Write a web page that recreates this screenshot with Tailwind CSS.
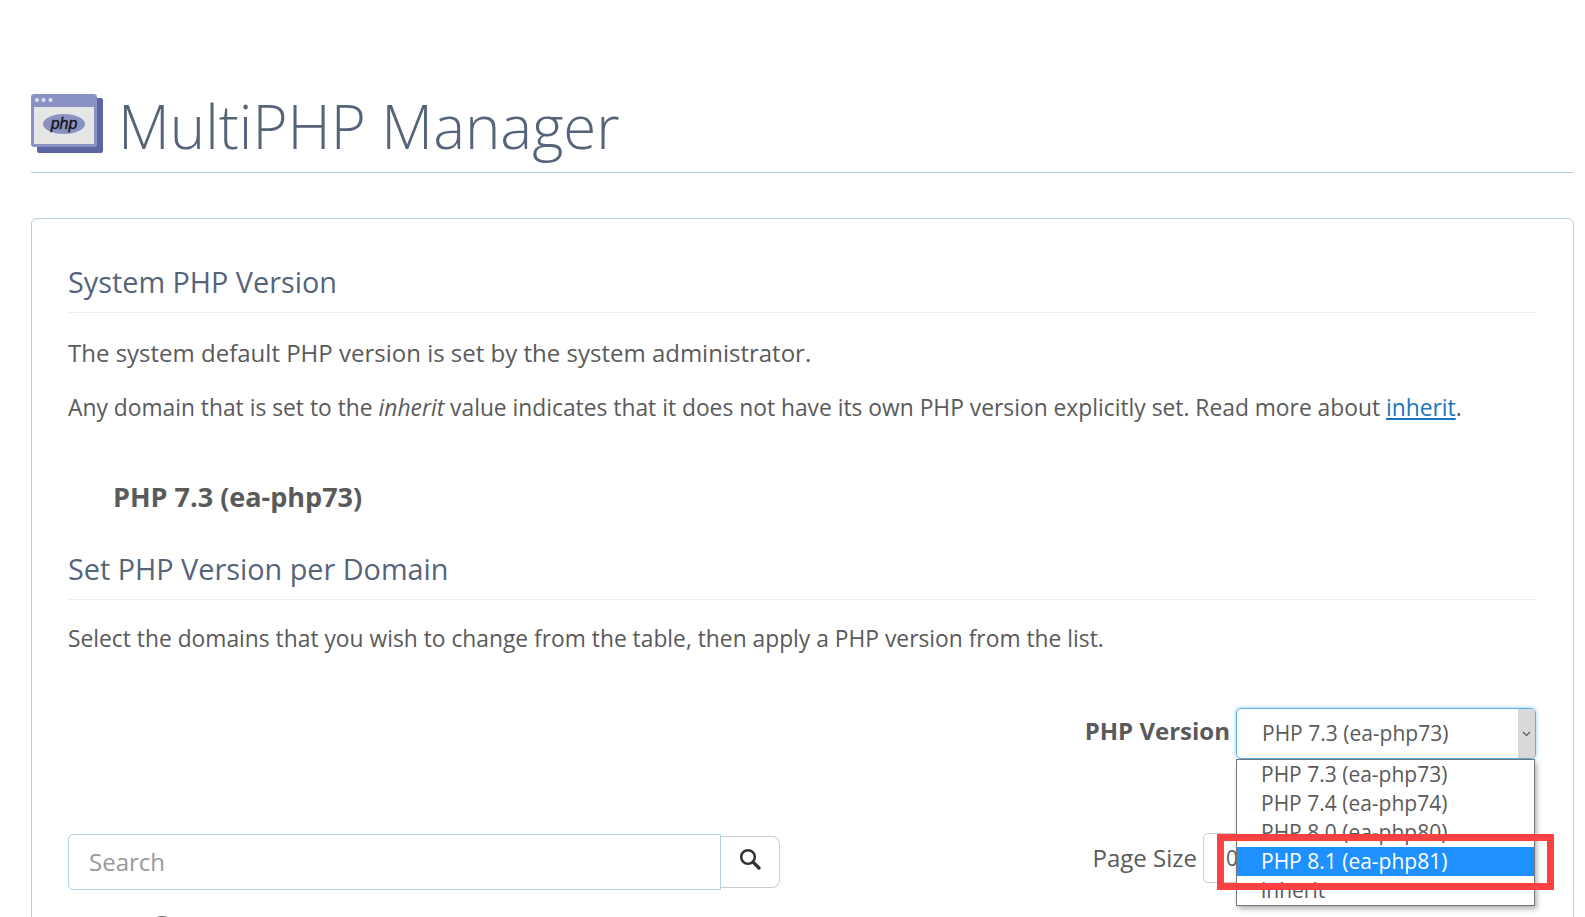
<!DOCTYPE html>
<html lang="en">
<head>
<meta charset="UTF-8">
<title>MultiPHP Manager</title>
<script src="https://cdn.jsdelivr.net/npm/@tailwindcss/browser@4"></script>
</head>
<body class="bg-white h-[917px] overflow-hidden font-['Open_Sans',sans-serif] text-[#5a5a5a]">

<!-- Heading -->
<div class="pt-[86px] pl-[31px] pr-[11px]">
  <div class="flex items-center h-[87px] border-b border-[#b5d0e0]">
    <svg width="72" height="59" viewBox="0 0 72 59" class="mr-[15px] mb-[11px]">
      <rect x="6" y="4" width="66" height="55" rx="2" fill="#5d66a3"/>
      <rect x="0" y="0" width="66" height="53" rx="3" fill="#8a92c4"/>
      <circle cx="6" cy="6" r="2" fill="#e4e4ea"/><circle cx="12.500" cy="6" r="2" fill="#e4e4ea"/><circle cx="19.500" cy="6" r="2" fill="#e4e4ea"/>
      <rect x="3" y="13" width="60" height="37" fill="#e6e6e6"/>
      <ellipse cx="33" cy="30" rx="21" ry="10" fill="#8a92c4"/>
      <text x="33" y="35" text-anchor="middle" font-family="Liberation Sans" font-style="italic" font-size="16" fill="#111" stroke="#111" stroke-width="0.300">php</text>
    </svg>
    <h1 class="text-[60px] leading-none text-[#56647a] font-light -mt-[6px]">MultiPHP Manager</h1>
  </div>
</div>

<!-- Card -->
<div class="ml-[31px] mr-[11px] mt-[45px] border border-[#b5d0e0] rounded-[6px] px-[36px] pr-[37px] pt-[44px] h-[800px]">
  <h2 class="text-[28.8px] leading-[38px] text-[#56647a] pb-[11px] border-b border-[#eee]">System PHP Version</h2>
  <p class="text-[24px] leading-[34px] mt-[23px]">The system default PHP version is set by the system administrator.</p>
  <p class="text-[22.8px] leading-[34px] mt-[21px]">Any domain that is set to the <em>inherit</em> value indicates that it does not have its own PHP version explicitly set. Read more about <a href="#" class="text-[#1b75bb] underline">inherit</a>.</p>
  <p class="text-[27px] leading-[36px] font-bold mt-[54px] ml-[45px]">PHP 7.3 (ea-php73)</p>
  <h2 class="text-[28.8px] leading-[38px] text-[#56647a] mt-[35px] pb-[11px] border-b border-[#eee]">Set PHP Version per Domain</h2>
  <p class="text-[22.8px] leading-[34px] mt-[22px]">Select the domains that you wish to change from the table, then apply a PHP version from the list.</p>

  <div class="flex justify-end items-center mt-[52px] relative">
    <span class="text-[24px] font-bold mr-[6px] mb-[6px]">PHP Version</span>
    <div class="w-[300px] h-[51px] border border-[#5aaee6] rounded-[5px] flex shadow-[0_0_4px_#8ccaf0]">
      <span class="flex-1 pl-[25px] text-[21px] leading-[49px]">PHP 7.3 (ea-php73)</span>
      <span class="w-[17px] bg-[#d9d9d9] flex items-center justify-center rounded-r-[4px]">
        <svg width="9" height="6" viewBox="0 0 9 6"><path d="M1 1l3.500 3.500L8 1" fill="none" stroke="#555" stroke-width="1.200"/></svg>
      </span>
    </div>
    <!-- open dropdown -->
    <ul class="absolute right-[1px] top-[51px] w-[299px] h-[147px] bg-white border border-[#767676] shadow-[2px_3px_5px_rgba(0,0,0,0.3)] overflow-hidden z-10 text-[21px] leading-[29px]">
      <li class="pl-[24px]">PHP 7.3 (ea-php73)</li>
      <li class="pl-[24px]">PHP 7.4 (ea-php74)</li>
      <li class="pl-[24px]">PHP 8.0 (ea-php80)</li>
      <li class="pl-[24px] bg-[#1e90ff] text-white">PHP 8.1 (ea-php81)</li>
      <li class="pl-[24px]">inherit</li>
    </ul>
    <!-- red annotation box -->
    <div class="absolute left-[1149px] top-[126px] w-[337px] h-[56px] border-[7px] border-[#fb4141] z-20"></div>
  </div>

  <div class="flex items-center mt-[74px]">
    <input type="text" placeholder="Search" class="w-[653px] h-[56px] border border-[#b5d0e0] rounded-l-[5px] px-[20px] text-[24px] placeholder:text-[#999] outline-none">
    <button class="w-[59px] h-[52px] border border-l-0 border-[#ccc] rounded-r-[8px] flex items-center justify-center">
      <svg width="22" height="22" viewBox="0 0 22 22" class="mb-[5px]"><circle cx="9" cy="9" r="6.800" fill="none" stroke="#333" stroke-width="2.600"/><path d="M14 14l6 6" stroke="#333" stroke-width="3.200" stroke-linecap="round"/></svg>
    </button>
    <div class="ml-auto flex items-center mr-[223px] mb-[7px]">
      <span class="text-[24px] mr-[6px]">Page Size</span>
      <div class="w-[110px] h-[50px] border border-[#ccc] rounded-[5px] pl-[22px] text-[21px] leading-[48px]">0</div>
    </div>
  </div>
  <!-- top of the next row, cut by the window -->
  <div class="w-[28px] h-[28px] rounded-full bg-[#666] ml-[80px] mt-[26px]"></div>
</div>
</body>
</html>
